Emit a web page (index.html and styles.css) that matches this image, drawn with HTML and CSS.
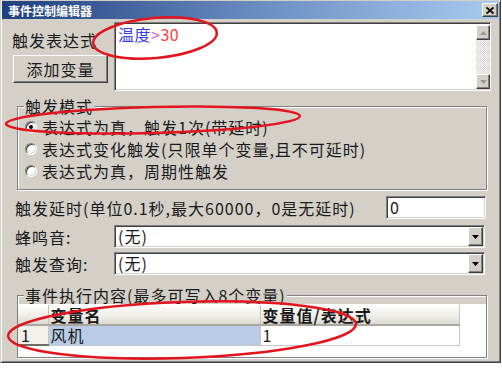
FILE: index.html
```html
<!DOCTYPE html>
<html lang="zh-CN">

<head>
  <meta charset="UTF-8">
  <title>事件控制编辑器</title>
  <link rel="stylesheet" href="styles.css">
</head>

<body>
  <div class="window">
    <div class="titlebar">
      <span class="title">事件控制编辑器</span>
      <span class="close">
        <svg width="8" height="7" viewBox="0 0 8 7"><path d="M0.5 0.5L7.5 6.5M7.5 0.5L0.5 6.5" stroke="#000" stroke-width="1.8" /></svg>
      </span>
    </div>

    <div class="content">
      <div class="expr-row">
        <div class="expr-side">
          <div class="expr-label">触发表达式</div>
          <div class="btn">添加变量</div>
        </div>
        <div class="memo">
          <div class="memo-text"><span class="c-var">温度</span><span class="c-op">&gt;</span><span class="c-num">30</span></div>
          <div class="vscroll">
            <div class="sbtn"><svg width="7" height="4" viewBox="0 0 7 4"><polygon points="0,4 3.5,0 7,4" fill="#9a9890" /></svg></div>
            <div class="strack"></div>
            <div class="sbtn"><svg width="7" height="4" viewBox="0 0 7 4"><polygon points="0,0 7,0 3.5,4" fill="#9a9890" /></svg></div>
          </div>
        </div>
      </div>

      <!-- 触发模式 -->
      <div class="group mode">
        <div class="group-title">触发模式</div>
        <div class="radios">
          <div class="radio"><span class="rdot on"></span>表达式为真，触发1次(带延时)</div>
          <div class="radio"><span class="rdot"></span>表达式变化触发(只限单个变量,且不可延时)</div>
          <div class="radio"><span class="rdot"></span>表达式为真，周期性触发</div>
        </div>
      </div>

      <div class="delay-row">
        <span>触发延时(单位0.1秒,最大60000，0是无延时)</span>
        <div class="edit">0</div>
      </div>

      <div class="combo-row beep">
        <span class="combo-label">蜂鸣音:</span>
        <div class="combo">
          <span class="combo-val">(无)</span>
          <span class="ddbtn"><svg width="7" height="4" viewBox="0 0 7 4"><polygon points="0,0 7,0 3.5,4" fill="#000" /></svg></span>
        </div>
      </div>

      <div class="combo-row query">
        <span class="combo-label">触发查询:</span>
        <div class="combo">
          <span class="combo-val">(无)</span>
          <span class="ddbtn"><svg width="7" height="4" viewBox="0 0 7 4"><polygon points="0,0 7,0 3.5,4" fill="#000" /></svg></span>
        </div>
      </div>

      <!-- 事件执行内容 -->
      <div class="group exec">
        <div class="group-title">事件执行内容(最多可写入8个变量)</div>
        <div class="grid">
          <table>
            <tr class="head">
              <th class="rh"></th>
              <th class="c1">变量名</th>
              <th class="c2">变量值/表达式</th>
            </tr>
            <tr class="row">
              <td class="rh">1</td>
              <td class="c1 sel">风机</td>
              <td class="c2">1</td>
            </tr>
          </table>
        </div>
      </div>
    </div>

    <!-- 红色标注圈 -->
    <svg class="marks" width="502" height="371" viewBox="0 0 502 371">
      <ellipse cx="155" cy="38" rx="62" ry="20" transform="rotate(-5 155 38)" />
      <ellipse cx="153" cy="120" rx="147" ry="13" transform="rotate(-1.5 153 120)" />
      <ellipse cx="182" cy="330" rx="174" ry="28" transform="rotate(-2 182 330)" />
    </svg>
  </div>
</body>

</html>
```

FILE: styles.css
```css
* {
  margin: 0;
  padding: 0;
  box-sizing: border-box;
}

body {
  background: #fff;
  font-family: "Noto Sans CJK SC", "Liberation Sans", sans-serif;
  font-size: 16px;
  letter-spacing: 1px;
  color: #1a1a1a;
}

.window {
  position: relative;
  width: 501px;
  height: 363px;
  padding: 0 1px 1px;
  background: #d4d0c8;
  border: 1px solid;
  border-color: #d4d0c8 #404040 #404040 #d4d0c8;
  box-shadow: inset 1px 1px 0 #fff, inset -1px -1px 0 #808080;
}

/* 标题栏 */
.titlebar {
  display: flex;
  align-items: center;
  height: 18px;
  padding: 0 1px 0 6px;
  background: linear-gradient(90deg, #1f3f7f, #6f92c6 55%, #a8cbf0);
}

.title {
  color: #fff;
  font-size: 12px;
  font-weight: bold;
  letter-spacing: 0;
}

.close {
  display: flex;
  align-items: center;
  justify-content: center;
  width: 16px;
  height: 14px;
  margin-left: auto;
  background: #d4d0c8;
  border: 1px solid;
  border-color: #fff #404040 #404040 #fff;
  box-shadow: inset -1px -1px 0 #808080;
}

/* 表达式 */
.expr-row {
  display: flex;
  height: 69px;
  margin-top: 3px;
}

.expr-side {
  width: 112px;
  padding-left: 10px;
}

.expr-label {
  margin-top: 8px;
  line-height: 20px;
}

.btn {
  display: flex;
  align-items: center;
  justify-content: center;
  width: 95px;
  height: 28px;
  margin: 5px 0 0 1px;
  background: #d4d0c8;
  border: 1px solid;
  border-color: #fff #404040 #404040 #fff;
  box-shadow: inset -1px -1px 0 #808080;
}

.memo {
  display: flex;
  width: 377px;
  height: 69px;
  background: #fff;
  border: 1px solid;
  border-color: #808080 #fff #fff #808080;
  box-shadow: inset 1px 1px 0 #404040, inset -1px -1px 0 #d4d0c8;
}

.memo-text {
  flex: 1;
  padding: 2px 0 0 3px;
  line-height: 18px;
  letter-spacing: 0.5px;
}

.c-var {
  color: #3a3af2;
}

.c-op {
  color: #e466e8;
}

.c-num {
  color: #ff3b3b;
}

.vscroll {
  display: flex;
  flex-direction: column;
  width: 14px;
  margin: 2px 0 1px;
}

.sbtn {
  display: flex;
  align-items: center;
  justify-content: center;
  height: 15px;
  background: #d4d0c8;
  border: 1px solid;
  border-color: #fff #404040 #404040 #fff;
  box-shadow: inset -1px -1px 0 #808080;
}

.strack {
  flex: 1;
  background: repeating-conic-gradient(#fff 0 25%, #d4d0c8 0 50%) 0 0 / 2px 2px;
}

/* 分组框 */
.group {
  width: 470px;
  margin-left: 15px;
  border: 1px solid #808080;
  box-shadow: inset 1px 1px 0 #fff, 1px 1px 0 #fff;
}

.group-title {
  width: fit-content;
  margin: -10px 0 0 6px;
  padding: 0 1px;
  line-height: 18px;
  background: #d4d0c8;
}

.mode {
  margin-top: 15px;
}

.radios {
  padding: 1px 0 7px 7px;
}

.radio {
  display: flex;
  align-items: center;
  height: 22px;
}

.rdot {
  position: relative;
  width: 12px;
  height: 12px;
  margin-right: 5px;
  border-radius: 50%;
  background: #fff;
  border: 1px solid;
  border-color: #808080 #fff #fff #808080;
  box-shadow: inset 1px 1px 0 #404040, inset -1px -1px 0 #d4d0c8;
}

.rdot.on::after {
  content: "";
  position: absolute;
  top: 3px;
  left: 3px;
  width: 4px;
  height: 4px;
  border-radius: 50%;
  background: #000;
}

/* 延时 / 下拉 */
.delay-row {
  display: flex;
  align-items: center;
  width: 484px;
  height: 23px;
  margin-top: 6px;
  padding-left: 13px;
}

.edit,
.combo {
  height: 23px;
  background: #fff;
  border: 1px solid;
  border-color: #808080 #fff #fff #808080;
  box-shadow: inset 1px 1px 0 #404040, inset -1px -1px 0 #d4d0c8;
}

.edit {
  width: 100px;
  margin-left: auto;
  padding-left: 3px;
  line-height: 20px;
}

.combo-row {
  display: flex;
  align-items: center;
  width: 483px;
  height: 23px;
}

.beep {
  margin-top: 6px;
}

.query {
  margin-top: 4px;
}

.combo-label {
  width: 112px;
  padding-left: 13px;
}

.combo {
  display: flex;
  flex: 1;
}

.combo-val {
  padding-left: 3px;
  line-height: 20px;
}

.ddbtn {
  display: flex;
  align-items: center;
  justify-content: center;
  width: 15px;
  margin: 1px 1px 1px auto;
  background: #d4d0c8;
  border: 1px solid;
  border-color: #fff #404040 #404040 #fff;
  box-shadow: inset -1px -1px 0 #808080;
}

/* 执行内容表格 */
.exec {
  margin-top: 20px;
}

.grid {
  height: 53px;
  padding-top: 1px;
  background: #fff;
}

.grid table {
  width: 442px;
  border-collapse: collapse;
  table-layout: fixed;
}

.grid th,
.grid td {
  padding: 0 0 0 2px;
  text-align: left;
  white-space: nowrap;
  line-height: 18px;
}

.grid .rh {
  width: 30px;
  padding-left: 3px;
}

.grid .c1 {
  width: 212px;
}

.head th {
  height: 20px;
  font-weight: bold;
  background: linear-gradient(#fdfdfb, #eeece6 60%, #dcd9d0);
  border-right: 1px solid #c6c3ba;
  border-bottom: 2px solid #a9a69d;
}

.row td {
  height: 20px;
  border-right: 1px solid #c8c8c8;
  border-bottom: 1px solid #c8c8c8;
}

.row .rh {
  background: #f1f0eb;
  border-bottom: 2px solid #6f6d66;
}

.row .sel {
  background: #b8cce6;
}

/* 标注 */
.marks {
  position: absolute;
  top: -1px;
  left: -1px;
  overflow: visible;
  pointer-events: none;
}

.marks ellipse {
  fill: none;
  stroke: #e3141d;
  stroke-width: 2.5;
}
```
